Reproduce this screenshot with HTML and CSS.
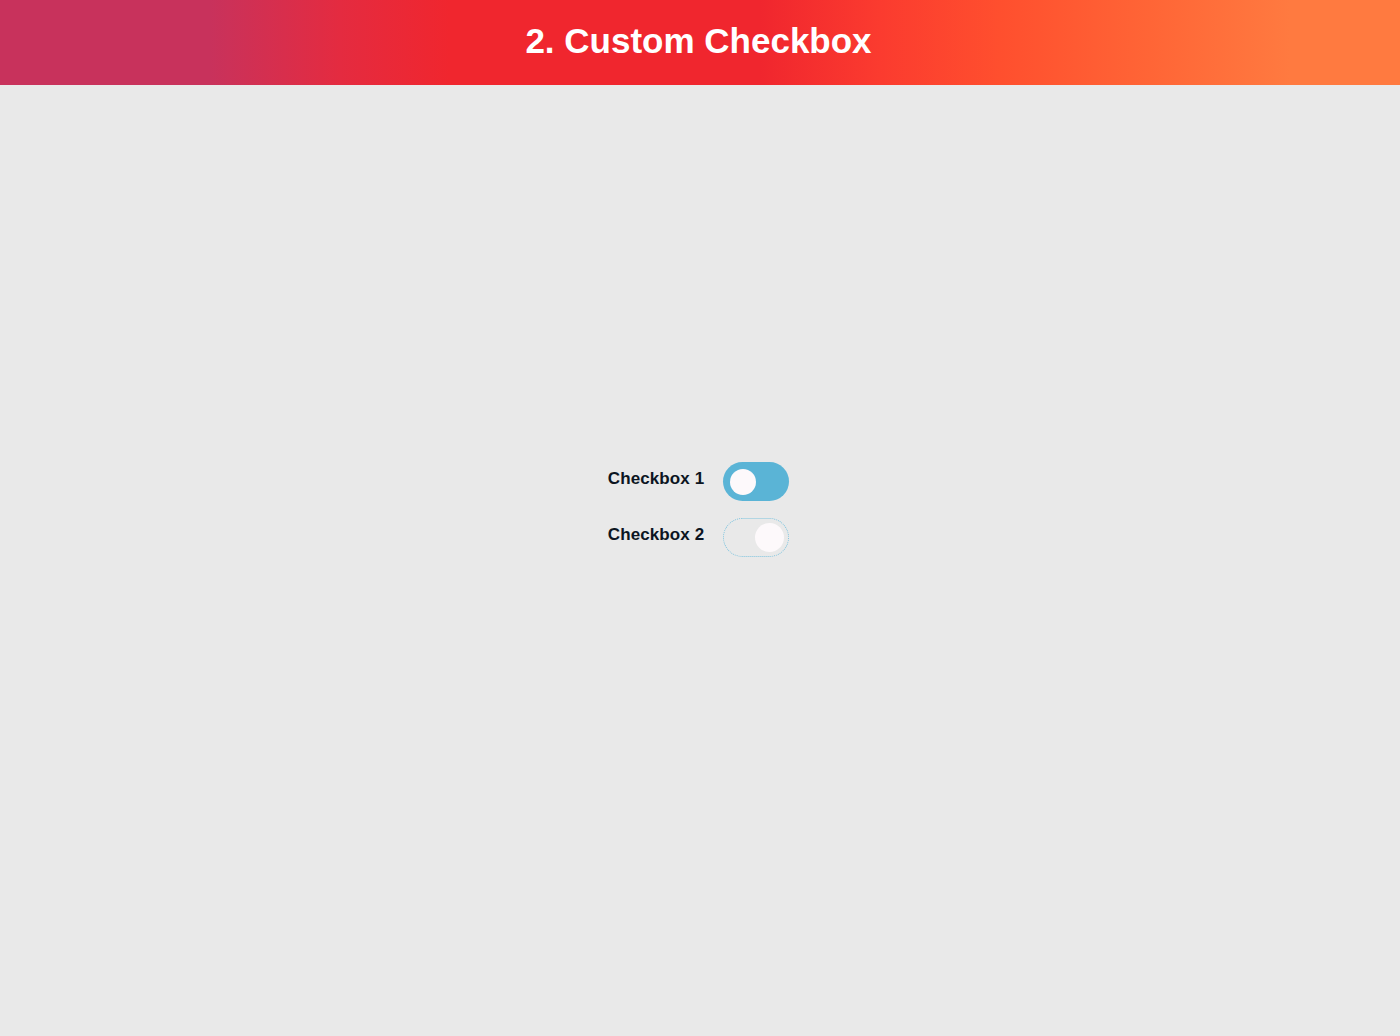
FILE: index.html
```html
<!DOCTYPE html>
<html lang="en">
<head>
<meta charset="utf-8">
<title>Custom Checkbox</title>
<link rel="stylesheet" href="styles.css">
</head>
<body>
<header class="banner">
  <h1 class="banner-title">2. Custom Checkbox</h1>
</header>
<main class="stage">
  <div class="rows">
    <label class="row">
      <span class="row-label">Checkbox 1</span>
      <span class="switch switch-on"><span class="knob"></span></span>
    </label>
    <label class="row">
      <span class="row-label">Checkbox 2</span>
      <span class="switch switch-off"><span class="knob"></span></span>
    </label>
  </div>
</main>
</body>
</html>
```
FILE: styles.css
```css
html, body {
  margin: 0;
  padding: 0;
}
body {
  background: #e9e9e9;
  font-family: "Liberation Sans", Arial, sans-serif;
  width: 1400px;
  height: 1036px;
  overflow: hidden;
}
.banner {
  height: 85px;
  display: flex;
  align-items: center;
  justify-content: center;
  background: linear-gradient(to right,
    #c8325c 0px,
    #c8325c 210px,
    #e42b40 340px,
    #f0262e 450px,
    #f0262e 760px,
    #fb3b2f 880px,
    #ff4f2e 1000px,
    #ff6536 1150px,
    #ff7a40 1290px,
    #ff7a40 1400px);
}
.banner-title {
  margin: 0 0 0 -3px;
  color: #ffffff;
  font-size: 35px;
  font-weight: bold;
  line-height: 1;
  padding-bottom: 4px;
}
.stage {
  padding-top: 377px;
  display: flex;
  justify-content: center;
}
.rows {
  display: flex;
  flex-direction: column;
  gap: 17px;
  margin-right: 3px;
}
.row {
  display: flex;
  align-items: center;
  gap: 19px;
}
.row-label {
  color: #0c1522;
  font-size: 17px;
  font-weight: bold;
  padding-bottom: 5px;
  letter-spacing: 0.1px;
}
.switch {
  position: relative;
  width: 66px;
  height: 39px;
  border-radius: 20px;
  box-sizing: border-box;
  display: flex;
  align-items: center;
}
.switch-on {
  background: #5ab4d6;
  padding-left: 7px;
}
.switch-off {
  border: 1px dotted #7cc3de;
  justify-content: flex-end;
  padding-right: 4px;
}
.knob {
  width: 26px;
  height: 26px;
  border-radius: 50%;
  background: #fdf9fb;
}
.switch-off .knob {
  width: 29px;
  height: 29px;
}
```
